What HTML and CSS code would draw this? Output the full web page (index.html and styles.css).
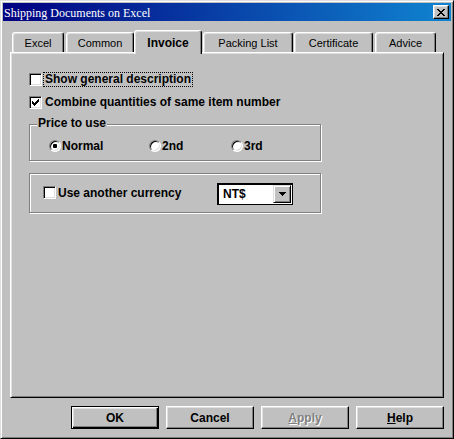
FILE: index.html
```html
<!DOCTYPE html>
<html>
<head>
<meta charset="utf-8">
<title>Shipping Documents on Excel</title>
<link rel="stylesheet" href="styles.css">
</head>
<body>
<div class="window">
  <div class="titlebar">
    <span class="title">Shipping Documents on Excel</span>
    <span class="close">
      <svg width="8" height="7" viewBox="0 0 8 7" shape-rendering="crispEdges"><path fill="#000" d="M0 0h2v1h-2z M6 0h2v1h-2z M1 1h2v1h-2z M5 1h2v1h-2z M2 2h4v1h-4z M3 3h2v1h-2z M2 4h4v1h-4z M1 5h2v1h-2z M5 5h2v1h-2z M0 6h2v1h-2z M6 6h2v1h-2z"/></svg>
    </span>
  </div>
  <div class="body">
    <div class="tabs">
      <div class="tab t-excel">Excel</div>
      <div class="tab t-common">Common</div>
      <div class="tab t-invoice active">Invoice</div>
      <div class="tab t-packing">Packing List</div>
      <div class="tab t-cert">Certificate</div>
      <div class="tab t-advice">Advice</div>
    </div>
    <div class="panel">
      <div class="check-row">
        <span class="cb"></span>
        <span class="lbl focus">Show general description</span>
      </div>
      <div class="check-row">
        <span class="cb"><svg width="7" height="7" viewBox="0 0 7 7" shape-rendering="crispEdges"><path fill="#000" d="M0 2h1v3h-1z M1 3h1v3h-1z M2 4h1v3h-1z M3 3h1v3h-1z M4 2h1v3h-1z M5 1h1v3h-1z M6 0h1v3h-1z"/></svg></span>
        <span class="lbl">Combine quantities of same item number</span>
      </div>

      <div class="group group-price">
        <span class="group-label">Price to use</span>
        <div class="radio-row">
          <div class="opt opt-wide"><span class="radio checked"></span><span class="opt-text">Normal</span></div>
          <div class="opt opt-mid"><span class="radio"></span><span class="opt-text">2nd</span></div>
          <div class="opt"><span class="radio"></span><span class="opt-text">3rd</span></div>
        </div>
      </div>

      <div class="group group-currency">
        <div class="currency-row">
          <span class="cb cb-cur"></span>
          <span class="cur-text">Use another currency</span>
          <div class="combo">
            <span class="combo-text">NT$</span>
            <span class="drop">
              <svg width="7" height="4" viewBox="0 0 7 4" shape-rendering="crispEdges"><path fill="#000" d="M0 0h7v1h-7z M1 1h5v1h-5z M2 2h3v1h-3z M3 3h1v1h-1z"/></svg>
            </span>
          </div>
        </div>
      </div>
    </div>
    <div class="buttons">
      <div class="btn default">OK</div>
      <div class="btn">Cancel</div>
      <div class="btn disabled"><u>A</u>pply</div>
      <div class="btn"><u>H</u>elp</div>
    </div>
  </div>
</div>
</body>
</html>
```

FILE: styles.css
```css
* { box-sizing: border-box; }
html, body { margin: 0; padding: 0; }
body {
  width: 454px;
  height: 439px;
  background: #c0c0c0;
  font-family: "Liberation Sans", Arial, sans-serif;
  font-size: 12px;
  color: #000;
  overflow: hidden;
}
.window {
  width: 454px;
  height: 439px;
  border: 1px solid;
  border-color: #dfdfdf #000 #000 #dfdfdf;
  box-shadow: inset 1px 1px #fff, inset -1px -1px #808080;
  padding: 2px;
  background: #c0c0c0;
}
.titlebar {
  height: 18px;
  display: flex;
  align-items: center;
  justify-content: space-between;
  background: linear-gradient(to right, #000080, #1084d0);
  padding: 0 2px 0 1px;
}
.title {
  font-family: "Liberation Serif", "Times New Roman", serif;
  font-size: 12px;
  color: #fff;
  line-height: 16px;
  padding-top: 2px;
}
.close {
  width: 16px;
  height: 14px;
  background: #c0c0c0;
  border: 1px solid;
  border-color: #fff #000 #000 #fff;
  box-shadow: inset -1px -1px #808080, inset 1px 1px #dfdfdf;
  display: flex;
  align-items: center;
  justify-content: center;
}
.close svg { display: block; }

.body { padding: 9px 7px 0 7px; }

.tabs {
  display: flex;
  align-items: flex-end;
  height: 22px;
  padding-left: 2px;
}
.tab {
  height: 20px;
  border: 1px solid;
  border-bottom: none;
  border-color: #fff #000 transparent #fff;
  border-radius: 3px 3px 0 0;
  box-shadow: inset -1px 0 #808080, inset 1px 1px #dfdfdf;
  padding-top: 3px;
  line-height: 14px;
  font-size: 11px;
  text-align: center;
  background: #c0c0c0;
}
.t-excel { width: 52px; margin-right: 2px; }
.t-common { width: 68px; }
.t-invoice { width: 68px; margin-right: 1px; }
.t-packing { width: 90px; margin-right: 1px; }
.t-cert { width: 79px; margin-right: 2px; }
.t-advice { width: 61px; }
.tab.active {
  height: 24px;
  margin-bottom: -2px;
  padding-top: 5px;
  font-size: 12px;
  font-weight: bold;
  position: relative;
  z-index: 2;
}

.panel {
  height: 346px;
  border: 1px solid;
  border-color: #fff #000 #000 #fff;
  box-shadow: inset 1px 1px #dfdfdf, inset -1px -1px #808080;
  padding: 19px 0 0 18px;
}

.check-row {
  display: flex;
  align-items: center;
  height: 15px;
}
.check-row + .check-row { margin-top: 8px; }
.cb {
  width: 13px;
  height: 13px;
  flex: none;
  background: #fff;
  border: 1px solid;
  border-color: #808080 #fff #fff #808080;
  box-shadow: inset 1px 1px #000, inset -1px -1px #dfdfdf;
  padding: 2px;
}
.cb svg { display: block; }
.lbl {
  margin-left: 1px;
  border: 1px dotted transparent;
  padding: 0 1px;
  line-height: 13px;
  font-weight: bold;
}
.lbl.focus { border-color: #000; }

.group {
  width: 292px;
  border: 1px solid #808080;
  box-shadow: inset 1px 1px #fff, 1px 1px #fff;
  display: flex;
  flex-direction: column;
  align-items: flex-start;
}
.group-price { height: 37px; margin-top: 14px; }
.group-currency { height: 40px; margin-top: 12px; }
.group-label {
  margin: -9px 0 0 7px;
  padding: 0 1px;
  background: #c0c0c0;
  line-height: 14px;
  font-weight: bold;
}
.radio-row {
  display: flex;
  align-items: center;
  height: 14px;
  margin-top: 9px;
  padding-left: 19px;
}
.opt { display: flex; align-items: center; }
.opt-wide { width: 100px; }
.opt-mid { width: 82px; }
.radio {
  width: 12px;
  height: 12px;
  flex: none;
  border-radius: 50%;
  background: #fff;
  border: 1px solid;
  border-color: #808080 #fff #fff #808080;
  box-shadow: inset 1px 1px #000, inset -1px -1px #dfdfdf;
  display: flex;
  align-items: center;
  justify-content: center;
}
.radio.checked::after {
  content: "";
  width: 4px;
  height: 4px;
  border-radius: 1px;
  background: #000;
}
.opt-text {
  margin-left: 1px;
  font-weight: bold;
  line-height: 14px;
}

.currency-row {
  display: flex;
  align-items: flex-start;
  height: 22px;
  margin-top: 9px;
  padding-left: 13px;
}
.cb-cur { margin-top: 3px; }
.cur-text {
  width: 159px;
  margin: 3px 0 0 2px;
  line-height: 14px;
  font-weight: bold;
}
.combo {
  width: 76px;
  height: 22px;
  background: #fff;
  border: 1px solid #000;
  box-shadow: inset 1px 1px #000;
  display: flex;
  align-items: center;
  padding-left: 5px;
}
.combo-text { font-weight: bold; line-height: 14px; }
.drop {
  margin-left: auto;
  margin-right: 1px;
  width: 18px;
  height: 18px;
  background: #c0c0c0;
  border: 1px solid;
  border-color: #dfdfdf #000 #000 #dfdfdf;
  box-shadow: inset 1px 1px #fff, inset -1px -1px #808080;
  display: flex;
  align-items: center;
  justify-content: center;
}
.drop svg { display: block; }

.buttons {
  display: flex;
  justify-content: flex-end;
  gap: 7px;
  margin-top: 8px;
}
.btn {
  width: 88px;
  height: 23px;
  border: 1px solid;
  border-color: #fff #000 #000 #fff;
  box-shadow: inset -1px -1px #808080, inset 1px 1px #dfdfdf;
  display: flex;
  align-items: center;
  justify-content: center;
  font-weight: bold;
  font-size: 12px;
}
.btn.default {
  border-color: #000;
  box-shadow: inset 1px 1px #fff, inset -1px -1px #000, inset -2px -2px #808080, inset 2px 2px #dfdfdf;
}
.btn.disabled {
  color: #808080;
  text-shadow: 1px 1px #fff;
}
.btn u { text-decoration: underline; }
```
